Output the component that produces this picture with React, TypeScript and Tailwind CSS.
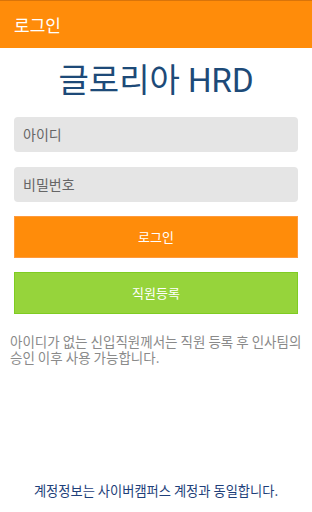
export default function App() {
  return (
    <div
      className="flex h-[512px] w-[312px] flex-col bg-white"
      style={{ fontFamily: '"Noto Sans CJK KR", Roboto, sans-serif' }}
    >
      <header className="flex h-12 items-center border-t border-[#d9740a] bg-[#ff8c0a] px-[14px]">
        <span className="text-[17px] text-white">로그인</span>
      </header>

      <h1
        className="mt-[12px] text-center text-[33px] leading-[42px] text-[#1d4a78]"
        style={{ fontFamily: 'Roboto, "Noto Sans CJK KR", sans-serif' }}
      >
        글로리아 HRD
      </h1>

      <div className="mt-[15px] flex flex-col px-[14px]">
        <div className="flex h-[35px] items-center rounded-[4px] bg-[#e5e5e5] px-[9px] text-[14px] text-[#666]">
          아이디
        </div>
        <div className="mt-[15px] flex h-[35px] items-center rounded-[4px] bg-[#e5e5e5] px-[9px] text-[14px] text-[#666]">
          비밀번호
        </div>
        <button className="mt-[14px] h-[42px] border border-[#ff9a3c] bg-[#ff8c0a] text-[13px] text-white">
          로그인
        </button>
        <button className="mt-[14px] h-[42px] border border-[#7fcc22] bg-[#96d43b] text-[13px] text-white">
          직원등록
        </button>
      </div>

      <p className="mt-[19px] pl-[10px] pr-[10px] text-[13.5px] leading-[16px] text-[#8a8a8a]">
        아이디가 없는 신입직원께서는 직원 등록 후 인사팀의 승인 이후 사용 가능합니다.
      </p>

      <div className="mt-auto mb-[11px] text-center text-[13.25px] text-[#1e3f7a]">
        계정정보는 사이버캠퍼스 계정과 동일합니다.
      </div>
    </div>
  );
}
